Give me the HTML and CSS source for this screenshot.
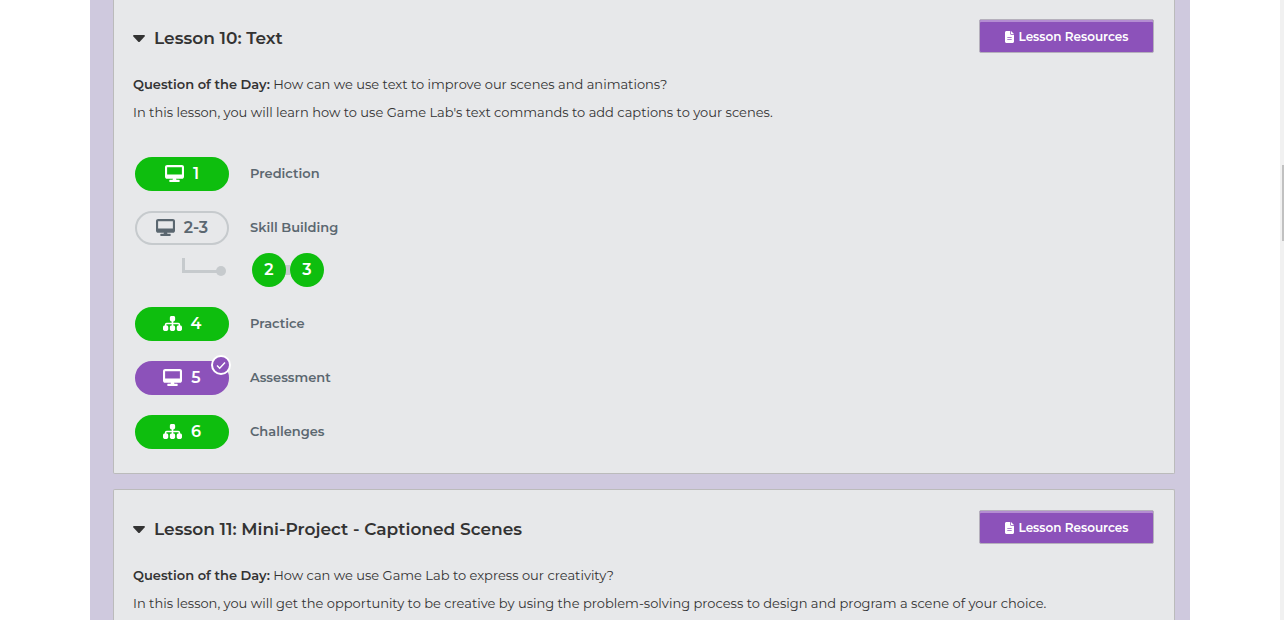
FILE: index.html
```html
<!DOCTYPE html>
<html lang="en">
<head>
<meta charset="utf-8">
<title>Lessons</title>
<link rel="stylesheet" href="styles.css">
</head>
<body>
<svg class="sprites" aria-hidden="true">
  <symbol id="desktop" viewBox="0 0 576 512"><path fill="currentColor" d="M64 0C28.700 0 0 28.700 0 64V352c0 35.300 28.700 64 64 64H240l-10.700 32H160c-17.700 0-32 14.300-32 32s14.300 32 32 32H416c17.700 0 32-14.300 32-32s-14.300-32-32-32H346.700L336 416H512c35.300 0 64-28.700 64-64V64c0-35.300-28.700-64-64-64H64zM512 64V288H64V64H512z"/></symbol>
  <symbol id="sitemap" viewBox="0 0 576 512"><path fill="currentColor" d="M208 80c0-26.500 21.500-48 48-48h64c26.500 0 48 21.500 48 48v64c0 26.500-21.500 48-48 48h-8v40H464c30.900 0 56 25.100 56 56v32h8c26.500 0 48 21.500 48 48v64c0 26.500-21.500 48-48 48H464c-26.500 0-48-21.500-48-48V368c0-26.500 21.500-48 48-48h8V288c0-4.400-3.600-8-8-8H312v40h8c26.500 0 48 21.500 48 48v64c0 26.500-21.500 48-48 48H256c-26.500 0-48-21.500-48-48V368c0-26.500 21.500-48 48-48h8V280H112c-4.400 0-8 3.600-8 8v32h8c26.500 0 48 21.500 48 48v64c0 26.500-21.500 48-48 48H48c-26.500 0-48-21.500-48-48V368c0-26.500 21.500-48 48-48h8V288c0-30.900 25.100-56 56-56H264V192h-8c-26.500 0-48-21.500-48-48V80z"/></symbol>
  <symbol id="file" viewBox="0 0 384 512"><path fill="currentColor" d="M64 0C28.700 0 0 28.700 0 64V448c0 35.300 28.700 64 64 64H320c35.300 0 64-28.700 64-64V160H256c-17.700 0-32-14.300-32-32V0H64zM256 0V128H384L256 0zM112 256H272c8.800 0 16 7.200 16 16s-7.200 16-16 16H112c-8.800 0-16-7.200-16-16s7.200-16 16-16zm0 96H272c8.800 0 16 7.200 16 16s-7.200 16-16 16H112c-8.800 0-16-7.200-16-16s7.200-16 16-16z"/></symbol>
  <symbol id="caret" viewBox="0 0 12 7"><path fill="currentColor" d="M1 0h10q1.500 .2.600 1.400L7 6.400q-1 1-2 0L.4 1.400Q-.5.200 1 0z"/></symbol>
</svg>
<main class="page">
  <div class="unit">
    <section class="lesson lesson-continued">
      <header class="lesson-header">
        <h2 class="lesson-title"><svg class="caret"><use href="#caret"/></svg>Lesson 10: Text</h2>
        <button class="resources" type="button"><svg class="file"><use href="#file"/></svg>Lesson Resources</button>
      </header>
      <div class="summary">
        <p><strong>Question of the Day:</strong> How can we use text to improve our scenes and animations?</p>
        <p>In this lesson, you will learn how to use Game Lab's text commands to add captions to your scenes.</p>
      </div>
      <ul class="levels">
        <li class="level"><a class="pill done" href="#l1"><svg class="icon"><use href="#desktop"/></svg>1</a><span class="name">Prediction</span></li>
        <li class="level"><a class="pill" href="#l2"><svg class="icon"><use href="#desktop"/></svg>2-3</a><span class="name">Skill Building</span></li>
        <li class="level sublevels">
          <span class="branch"><svg class="elbow" viewBox="0 0 46 24" aria-hidden="true"><path d="M2.500 0v13.500H40" fill="none" stroke="#c6cacd" stroke-width="3"/><circle cx="40" cy="13" r="5" fill="#c6cacd"/></svg></span>
          <a class="bubble" href="#l2">2</a><span class="link"></span><a class="bubble" href="#l3">3</a>
        </li>
        <li class="level"><a class="pill done" href="#l4"><svg class="icon"><use href="#sitemap"/></svg>4</a><span class="name">Practice</span></li>
        <li class="level"><a class="pill assessed" href="#l5"><svg class="icon"><use href="#desktop"/></svg>5<svg class="badge" viewBox="0 0 20 20"><circle cx="10" cy="10" r="9" fill="#8c52ba" stroke="#fff" stroke-width="2"/><path d="M6 10.500l2.700 2.700L14 7.500" fill="none" stroke="#fff" stroke-width="1.400"/></svg></a><span class="name">Assessment</span></li>
        <li class="level"><a class="pill done" href="#l6"><svg class="icon"><use href="#sitemap"/></svg>6</a><span class="name">Challenges</span></li>
      </ul>
    </section>
    <section class="lesson lesson-open">
      <header class="lesson-header">
        <h2 class="lesson-title"><svg class="caret"><use href="#caret"/></svg>Lesson 11: Mini-Project - Captioned Scenes</h2>
        <button class="resources" type="button"><svg class="file"><use href="#file"/></svg>Lesson Resources</button>
      </header>
      <div class="summary">
        <p><strong>Question of the Day:</strong> How can we use Game Lab to express our creativity?</p>
        <p>In this lesson, you will get the opportunity to be creative by using the problem-solving process to design and program a scene of your choice.</p>
      </div>
    </section>
  </div>
</main>
<div class="track"><div class="thumb"></div></div>
</body>
</html>
```
FILE: styles.css
```css
* { box-sizing: border-box; }

body {
  margin: 0;
  min-height: 100vh;
  display: flex;
  background: #fff;
  color: #333;
  font: 13px/28px Metropolis, Montserrat, Inter, sans-serif;
}

.sprites { display: none; }

.page { flex: 1; min-width: 0; display: flex; justify-content: center; }

.unit {
  display: flex;
  flex-direction: column;
  gap: 15px;
  width: 100%;
  max-width: 1100px;
  padding: 0 15px 0 23px;
  background: #cfc9de;
}

.lesson {
  padding: 20px 20px 24px 19px;
  background: #e7e8ea;
  border: 1px solid #bbb;
  border-radius: 2px;
}

.lesson-continued {
  padding-top: 19px;
  border-top: 0;
  border-radius: 0 0 2px 2px;
}

.lesson-open {
  flex: 1;
  padding-bottom: 0;
  border-bottom: 0;
  border-radius: 2px 2px 0 0;
}

.lesson-header {
  display: flex;
  align-items: center;
  justify-content: space-between;
  margin-bottom: 17px;
}

.lesson-title {
  display: flex;
  align-items: center;
  gap: 9px;
  margin: 0;
  padding-top: 4px;
  font-size: 17px;
  font-weight: 600;
  line-height: 30px;
}

.caret { width: 12px; height: 7px; }

.resources {
  display: flex;
  align-items: center;
  justify-content: center;
  gap: 5px;
  width: 175px;
  height: 34px;
  padding: 2px 0 0;
  background: #8c52ba;
  border: 1px solid #b5b0bc;
  border-radius: 2px;
  box-shadow: inset 0 2px #b48cd2;
  color: #fff;
  font: 600 12px/20px Metropolis, Montserrat, Inter, sans-serif;
}

.file { width: 9px; height: 12px; }

.summary p { margin: 0; }
.summary strong { font-weight: 600; }

.levels {
  display: flex;
  flex-direction: column;
  gap: 20px;
  margin: 31px 0 0;
  padding: 0 2px;
  list-style: none;
}

.level { display: flex; align-items: center; }

.pill {
  position: relative;
  display: flex;
  align-items: center;
  justify-content: center;
  gap: 9px;
  width: 94px;
  height: 34px;
  border: 2px solid #c6cacd;
  border-radius: 17px;
  color: #5b6770;
  font-size: 16px;
  font-weight: 600;
  text-decoration: none;
}

.done { background: #0ebe0e; border-color: #0ebe0e; color: #fff; }
.assessed { background: #8c52ba; border-color: #8c52ba; color: #fff; }

.icon { width: 19px; height: 17px; margin-bottom: 2px; }

.badge {
  position: absolute;
  top: -8px;
  right: -4px;
  width: 20px;
  height: 20px;
}

.name {
  margin-left: 21px;
  padding-bottom: 2px;
  color: #5b6770;
  font-size: 13px;
  font-weight: 600;
}

.sublevels { margin-top: -12px; }

.branch {
  display: flex;
  width: 94px;
  margin-right: 23px;
  padding-left: 46px;
}

.elbow { width: 46px; height: 24px; }

.bubble {
  display: flex;
  align-items: center;
  justify-content: center;
  width: 34px;
  height: 34px;
  border-radius: 50%;
  background: #0ebe0e;
  color: #fff;
  font-size: 16px;
  font-weight: 600;
  text-decoration: none;
}

.link {
  width: 4px;
  height: 10px;
  background: #c6cacd;
  box-shadow: -2px 0 #c6cacd;
}

.bubble { position: relative; }

.track { width: 4px; padding: 165px 0 0 2px; background: #f1f1f1; }
.thumb { height: 76px; background: #c1c1c1; }
```
